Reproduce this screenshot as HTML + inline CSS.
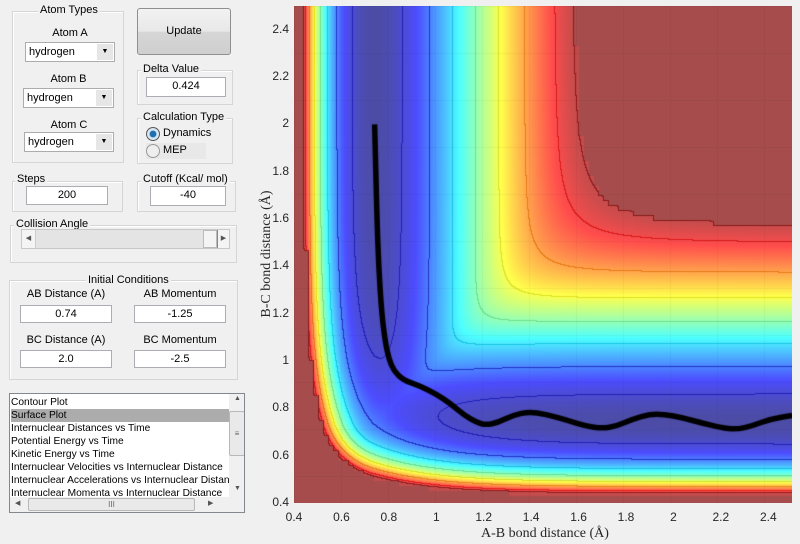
<!DOCTYPE html>
<html><head><meta charset="utf-8">
<style>
*{box-sizing:border-box;margin:0;padding:0}
body{width:800px;height:544px;background:#f0f0f0;font-family:"Liberation Sans",sans-serif;font-size:11px;color:#000;position:relative;overflow:hidden}
.a{position:absolute}
.panel{position:absolute;border:1px solid #d5d5d5;box-shadow:inset 1px 1px 0 #fff}
.pt{position:absolute;background:#f0f0f0;padding:0 2px;font-size:11px;white-space:nowrap}
.edit{position:absolute;background:#fff;border:1px solid #abadb3;text-align:center;font-size:11px;line-height:17px}
.pop{position:absolute;background:#fff;border:1px solid #acacac;font-size:11px;padding-left:3px;line-height:18px}
.pop i{position:absolute;right:1px;top:1px;bottom:1px;width:16px;background:#e6e6e6;font-style:normal;font-size:7px;text-align:center;line-height:16px}
.lbl{position:absolute;text-align:center;font-size:11px}
.tk{position:absolute;font-size:12px;color:#262626}
</style></head><body>
<div class="panel" style="left:12px;top:11px;width:112px;height:152px"></div>
<div class="pt" style="left:38px;top:4px">Atom Types</div>
<div class="lbl" style="left:25px;top:27px;width:90px">Atom A</div>
<div class="pop" style="left:25px;top:42px;width:90px;height:20px">hydrogen<i>▼</i></div>
<div class="lbl" style="left:23px;top:73px;width:91px">Atom B</div>
<div class="pop" style="left:23px;top:88px;width:91px;height:20px">hydrogen<i>▼</i></div>
<div class="lbl" style="left:24px;top:119px;width:90px">Atom C</div>
<div class="pop" style="left:24px;top:132px;width:90px;height:20px">hydrogen<i>▼</i></div>
<div class="a" style="left:137px;top:8px;width:94px;height:47px;border:1px solid #8f8f8f;border-radius:3px;background:linear-gradient(#f2f2f2 0%,#e8e8e8 50%,#d6d6d6 51%,#cfcfcf 100%);text-align:center;line-height:45px">Update</div>
<div class="panel" style="left:137px;top:70px;width:96px;height:35px"></div>
<div class="pt" style="left:141px;top:63px">Delta Value</div>
<div class="edit" style="left:146px;top:77px;width:80px;height:20px">0.424</div>
<div class="panel" style="left:137px;top:118px;width:96px;height:46px"></div>
<div class="pt" style="left:141px;top:111px">Calculation Type</div>
<div class="a" style="left:146px;top:127px;width:14px;height:14px;border-radius:50%;border:1px solid #555;background:radial-gradient(#1f6fb0 35%,#d8e6f2 45%)"></div>
<div class="a" style="left:163px;top:127px">Dynamics</div>
<div class="a" style="left:146px;top:143px;width:60px;height:16px;background:#e8e8e8"></div>
<div class="a" style="left:146px;top:144px;width:14px;height:14px;border-radius:50%;border:1px solid #999;background:#eee"></div>
<div class="a" style="left:163px;top:144px">MEP</div>
<div class="panel" style="left:12px;top:181px;width:111px;height:31px"></div>
<div class="pt" style="left:15px;top:173px">Steps</div>
<div class="edit" style="left:26px;top:186px;width:82px;height:19px">200</div>
<div class="panel" style="left:137px;top:181px;width:99px;height:31px"></div>
<div class="pt" style="left:141px;top:173px">Cutoff (Kcal/ mol)</div>
<div class="edit" style="left:150px;top:186px;width:76px;height:20px">-40</div>
<div class="panel" style="left:10px;top:225px;width:227px;height:38px"></div>
<div class="pt" style="left:14px;top:218px">Collision Angle</div>
<div class="a" style="left:21px;top:229px;width:209px;height:20px;background:#e4e4e4;border:1px solid #c8c8c8"></div>
<div class="a" style="left:22px;top:230px;width:14px;height:18px;background:#f4f4f4;border-right:1px solid #ccc;font-size:7px;text-align:center;line-height:18px;color:#555">◀</div>
<div class="a" style="left:203px;top:230px;width:14px;height:18px;background:#f4f4f4;border:1px solid #bbb"></div>
<div class="a" style="left:217px;top:230px;width:12px;height:18px;background:#f4f4f4;border-left:1px solid #888;font-size:7px;text-align:center;line-height:18px;color:#555">▶</div>
<div class="panel" style="left:9px;top:280px;width:229px;height:100px"></div>
<div class="pt" style="left:86px;top:274px">Initial Conditions</div>
<div class="lbl" style="left:20px;top:288px;width:92px">AB Distance (A)</div>
<div class="lbl" style="left:134px;top:288px;width:92px">AB Momentum</div>
<div class="edit" style="left:20px;top:305px;width:92px;height:18px">0.74</div>
<div class="edit" style="left:134px;top:305px;width:92px;height:18px">-1.25</div>
<div class="lbl" style="left:20px;top:334px;width:92px">BC Distance (A)</div>
<div class="lbl" style="left:134px;top:334px;width:92px">BC Momentum</div>
<div class="edit" style="left:20px;top:350px;width:92px;height:18px">2.0</div>
<div class="edit" style="left:134px;top:350px;width:92px;height:18px">-2.5</div>
<div class="a" style="left:9px;top:393px;width:236px;height:120px;background:#fff;border:1px solid #828790;overflow:hidden">
 <div class="a" style="left:1px;top:2px;width:218px;line-height:13px;white-space:nowrap;overflow:hidden;font-size:10.2px">
  <div>Contour Plot</div>
  <div style="background:#acacac">Surface Plot</div>
  <div>Internuclear Distances vs Time</div>
  <div>Potential Energy vs Time</div>
  <div>Kinetic Energy vs Time</div>
  <div>Internuclear Velocities vs Internuclear Distance</div>
  <div>Internuclear Accelerations vs Internuclear Distance</div>
  <div>Internuclear Momenta vs Internuclear Distance</div>
 </div>
 <div class="a" style="left:219px;top:0;width:16px;height:103px;background:#f0f0f0"></div>
 <div class="a" style="left:219px;top:17px;width:16px;height:45px;background:#e9e9e9;border:1px solid #b8b8b8;border-radius:2px;text-align:center;line-height:43px;font-size:8px;color:#666">≡</div>
 <div class="a" style="left:224px;top:1px;font-size:7px;color:#555">▲</div>
 <div class="a" style="left:224px;top:91px;font-size:7px;color:#555">▼</div>
 <div class="a" style="left:0;top:103px;width:235px;height:16px;background:#f0f0f0"></div>
 <div class="a" style="left:18px;top:104px;width:167px;height:13px;background:#e9e9e9;border:1px solid #b8b8b8;border-radius:2px;text-align:center;font-size:8px;line-height:11px;color:#666">III</div>
 <div class="a" style="left:5px;top:105px;font-size:7px;color:#555">◀</div>
 <div class="a" style="left:198px;top:105px;font-size:7px;color:#555">▶</div>
</div>
<canvas id="c" width="498" height="497" style="position:absolute;left:294px;top:6px"></canvas>
<div id="ticks"></div>
<div class="a" style="left:420px;top:526px;width:250px;text-align:center;font-family:'Liberation Serif',serif;font-size:14px;color:#262626">A-B bond distance (Å)</div>
<div class="a" style="left:142px;top:246px;width:250px;text-align:center;font-family:'Liberation Serif',serif;font-size:14px;color:#262626;transform:rotate(-90deg)">B-C bond distance (Å)</div>
<script>
var W=498,H=497,X0=0.4,X1=2.5,Y0=0.4,Y1=2.5;
var D=109.5,b=1.942,r0=0.742;
function u(r){var e=Math.exp(-b*(r-r0));return (1-e)*(1-e);}
function at(r){return r>r0?Math.max(1e-9,u(r)):1e-9;}
function rp(r){return r<r0?u(r):0;}
function V(x,y){var ax=at(x),ay=at(y);
 var sm=Math.pow(Math.pow(ax,-6)+Math.pow(ay,-6),-1/6);
 return -D+D*(sm+rp(x)+rp(y))+13.7*Math.exp(-4*(x+y-2*r0));}
function jet(t){t=Math.max(0,Math.min(1,t));
var r=Math.min(1,Math.max(0,Math.min(4*t-1.5,-4*t+4.5)));
var g=Math.min(1,Math.max(0,Math.min(4*t-0.5,-4*t+3.5)));
var bb=Math.min(1,Math.max(0,Math.min(4*t+0.5,-4*t+2.5)));return [r,g,bb];}
var cv=document.getElementById('c'),ctx=cv.getContext('2d'),img=ctx.createImageData(W,H);
var vmin=-109.5,vmax=-40,cmax=-37,G=5;
var vals=new Float32Array(W*H);
for(var j=0;j<H;j++)for(var i=0;i<W;i++){
 var x=X0+(i+0.5)/W*(X1-X0),y=Y1-(j+0.5)/H*(Y1-Y0);
 vals[j*W+i]=V(x,y);}
function lev(v){if(v>vmax)return 99;return Math.floor((v+105)/10);}
function LL(ii,jj){var vv=vals[jj*W+ii];var vbb=vals[Math.floor(jj/G)*G*W+Math.floor(ii/G)*G];return vbb>vmax?99:lev(vv);}
for(var j=0;j<H;j++)for(var i=0;i<W;i++){
 var v=vals[j*W+i],c,k=(j*W+i)*4;
 var vb=vals[Math.floor(j/G)*G*W+Math.floor(i/G)*G];
 var cap=vb>vmax;
 if(cap)c=[0.5,0,0];else c=jet((Math.min(v,vmax)-vmin)/(cmax-vmin));
 var rr=c[0]*255*0.7+0.3*255,gg=c[1]*255*0.7+0.3*255,bl=c[2]*255*0.7+0.3*255;
 var L=cap?99:lev(v),line=false,nb99=false;
 if(i+1<W){var q=LL(i+1,j);if(q!=L){line=true;if(q==99)nb99=true;}}
 if(j+1<H){var q2=LL(i,j+1);if(q2!=L){line=true;if(q2==99)nb99=true;}}
 if(line){var cl;
  if(L>=99||nb99)cl=[0.55,0,0];
  else cl=jet((Math.min(v,vmax)-vmin)/(cmax-vmin));
  var lr=cl[0]*220,lg=cl[1]*210,lb=cl[2]*210;
  if(v<-90&&!nb99&&L<99){lr=10;lg=10;lb=170;}
  rr=(rr+lr*2)/3;gg=(gg+lg*2)/3;bl=(bl+lb*2)/3;}
 if(i%47==0||j%47==0){rr*=0.96;gg*=0.96;bl*=0.96;}
 img.data[k]=rr;img.data[k+1]=gg;img.data[k+2]=bl;img.data[k+3]=255;}
ctx.putImageData(img,0,0);
var pts=[[0.74,2.0],[0.745,1.8],[0.75,1.6],[0.757,1.4],[0.77,1.2],[0.785,1.08],[0.8,1.01],[0.82,0.96],[0.86,0.92],[0.93,0.895],[1.0,0.86],[1.06,0.82],[1.12,0.77],[1.17,0.74],[1.21,0.73],[1.26,0.74],[1.32,0.77],[1.39,0.785],[1.46,0.775],[1.55,0.75],[1.63,0.725],[1.7,0.715],[1.76,0.725],[1.83,0.755],[1.9,0.775],[1.96,0.775],[2.04,0.76],[2.13,0.735],[2.22,0.715],[2.27,0.712],[2.33,0.725],[2.41,0.755],[2.5,0.77]];
function px(x){return (x-X0)/(X1-X0)*W}function py(y){return (Y1-y)/(Y1-Y0)*H}
ctx.strokeStyle='#000';ctx.lineWidth=5.5;ctx.lineJoin='round';ctx.beginPath();
ctx.moveTo(px(pts[0][0]),py(pts[0][1]));
for(var n=1;n<pts.length-1;n++){var mx=(px(pts[n][0])+px(pts[n+1][0]))/2,my=(py(pts[n][1])+py(pts[n+1][1]))/2;ctx.quadraticCurveTo(px(pts[n][0]),py(pts[n][1]),mx,my);}
ctx.lineTo(px(2.5),py(0.77));ctx.stroke();
var t=document.getElementById('ticks'),h='';
var xs=[0.4,0.6,0.8,1,1.2,1.4,1.6,1.8,2,2.2,2.4];
xs.forEach(function(v){var X=294+px(v);h+='<div class="tk" style="left:'+(X-15)+'px;top:510px;width:30px;text-align:center">'+v+'</div>';
var Y=6+py(v);h+='<div class="tk" style="left:258px;top:'+(Y-8)+'px;width:31px;text-align:right">'+v+'</div>';});
t.innerHTML=h;
</script>
</body></html>
